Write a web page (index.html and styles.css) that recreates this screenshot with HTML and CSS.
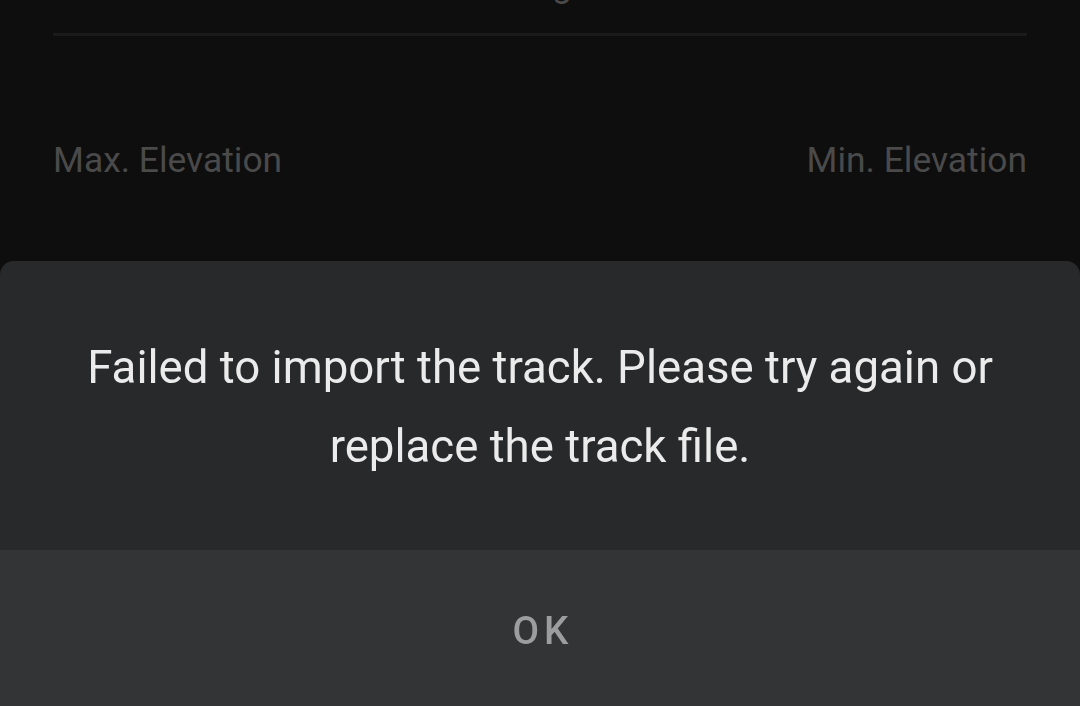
FILE: index.html
```html
<!DOCTYPE html>
<html lang="en">
<head>
  <meta charset="UTF-8">
  <title>Track details</title>
  <meta name="viewport" content="width=device-width, initial-scale=1.0">
  <link rel="stylesheet" href="styles.css">
</head>
<body>
  <main class="summary">
    <div class="summary-title">Length</div>
    <div class="divider"></div>
    <div class="stats">
      <span class="stat-label">Max. Elevation</span>
      <span class="stat-label">Min. Elevation</span>
    </div>
  </main>

  <div class="sheet">
    <div class="sheet-body">
      <p class="sheet-msg">Failed to import the track. Please try again or<br>replace the track file.</p>
    </div>
    <button class="sheet-btn" type="button">OK</button>
  </div>
</body>
</html>
```

FILE: styles.css
```css
:root {
  --bg: #0e0e0e;
  --sheet: #28292b;
  --sheet-btn: #333436;
  --muted: #4a4a4a;
  --text: #ebebeb;
  --btn-text: #9c9d9e;
  --line: #1b1b1b;
}

* {
  box-sizing: border-box;
  font-family: Roboto, 'Noto Sans', sans-serif;
}

html, body {
  height: 100%;
}

body {
  margin: 0;
  background: var(--bg);
  overflow: hidden;
}

.summary {
  padding: 0 53px;
}

.summary-title {
  margin-top: -35px;
  font-size: 35px;
  line-height: 42px;
  text-align: center;
  color: var(--muted);
  padding-left: 18px;
}

.divider {
  margin-top: 26px;
  height: 3px;
  background: var(--line);
}

.stats {
  display: flex;
  justify-content: space-between;
  margin-top: 103px;
}

.stat-label {
  font-size: 35.4px;
  line-height: 42px;
  color: var(--muted);
}

/* bottom dialog */
.sheet {
  position: fixed;
  left: 0;
  right: 0;
  bottom: 0;
  height: 445px;
  display: flex;
  flex-direction: column;
  background: var(--sheet);
  border-radius: 14px 14px 0 0;
  overflow: hidden;
}

.sheet-body {
  height: 289px;
  display: flex;
  align-items: center;
  justify-content: center;
  padding-top: 3px;
}

.sheet-msg {
  margin: 0;
  font-size: 45.6px;
  line-height: 79px;
  text-align: center;
  color: var(--text);
}

.sheet-btn {
  flex: 1;
  border: none;
  background: var(--sheet-btn);
  color: var(--btn-text);
  font-size: 38.5px;
  font-weight: 500;
  letter-spacing: 5px;
  padding: 4px 0 0 6px;
  cursor: pointer;
}
```
